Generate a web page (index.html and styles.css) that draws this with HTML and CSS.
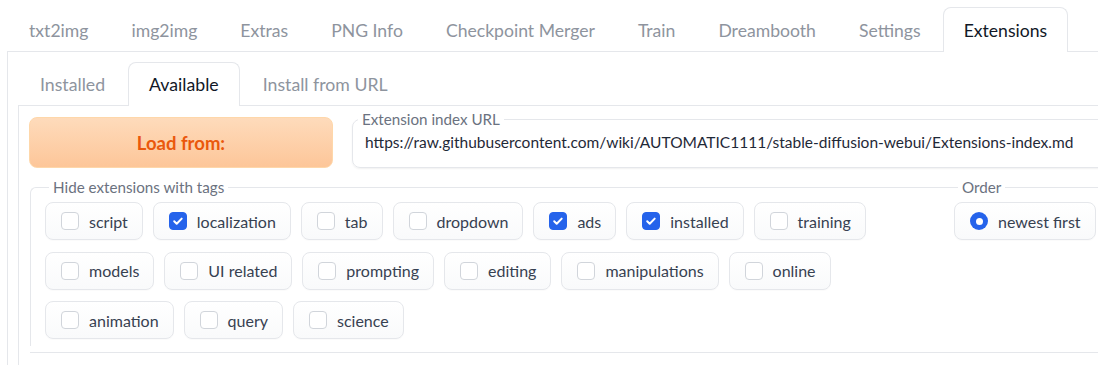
FILE: index.html
```html
<!DOCTYPE html>
<html lang="en">
<head>
    <meta charset="UTF-8">
    <title>Extensions</title>
    <link rel="stylesheet" href="styles.css">
</head>
<body>
    <div class="app">
        <!-- Main tabs -->
        <div class="tab-nav main">
            <button class="tab">txt2img</button>
            <button class="tab">img2img</button>
            <button class="tab">Extras</button>
            <button class="tab">PNG Info</button>
            <button class="tab">Checkpoint Merger</button>
            <button class="tab">Train</button>
            <button class="tab">Dreambooth</button>
            <button class="tab">Settings</button>
            <button class="tab selected">Extensions</button>
        </div>
        <div class="tab-panel">
            <!-- Extension sub tabs -->
            <div class="tab-nav sub">
                <button class="tab">Installed</button>
                <button class="tab selected">Available</button>
                <button class="tab">Install from URL</button>
            </div>
            <div class="tab-panel sub">
                <div class="load-row">
                    <button class="load-button">Load from:</button>
                    <fieldset class="url-box">
                        <legend>Extension index URL</legend>
                        <input class="url-input" type="text" value="https://raw.githubusercontent.com/wiki/AUTOMATIC1111/stable-diffusion-webui/Extensions-index.md">
                    </fieldset>
                </div>

                <div class="filter-row">
                    <fieldset class="group tags">
                        <legend>Hide extensions with tags</legend>
                        <div class="options">
                            <label class="option"><span class="box"></span>script</label>
                            <label class="option"><span class="box checked"></span>localization</label>
                            <label class="option"><span class="box"></span>tab</label>
                            <label class="option"><span class="box"></span>dropdown</label>
                            <label class="option"><span class="box checked"></span>ads</label>
                            <label class="option"><span class="box checked"></span>installed</label>
                            <label class="option"><span class="box"></span>training</label>
                            <label class="option"><span class="box"></span>models</label>
                            <label class="option"><span class="box"></span>UI related</label>
                            <label class="option"><span class="box"></span>prompting</label>
                            <label class="option"><span class="box"></span>editing</label>
                            <label class="option"><span class="box"></span>manipulations</label>
                            <label class="option"><span class="box"></span>online</label>
                            <label class="option"><span class="box"></span>animation</label>
                            <label class="option"><span class="box"></span>query</label>
                            <label class="option"><span class="box"></span>science</label>
                        </div>
                    </fieldset>
                    <fieldset class="group order">
                        <legend>Order</legend>
                        <div class="options">
                            <label class="option"><span class="radio"></span>newest first</label>
                        </div>
                    </fieldset>
                </div>
            </div>
        </div>
    </div>
</body>
</html>
```

FILE: styles.css
```css
* {
    margin: 0;
    padding: 0;
    box-sizing: border-box;
}

body {
    font-family: 'Lato', 'Noto Sans', sans-serif;
    background: white;
    overflow: hidden;
    color: #374151;
}

.app {
    width: 1130px;
    height: 365px;
    padding: 7px 0 0 7px;
    display: flex;
    flex-direction: column;
}

/* Tabs */
.tab-nav {
    display: flex;
    gap: 2px;
    padding-left: 1px;
    margin-bottom: -1px;
}

.tab {
    font-family: inherit;
    font-size: 17.7px;
    color: #8e949e;
    background: none;
    border: 1px solid transparent;
    border-bottom: none;
    border-radius: 8px 8px 0 0;
    height: 45px;
    padding: 0 20px;
    cursor: pointer;
}

.tab-nav.main {
    gap: 1px;
}

.tab-nav.main .tab {
    font-size: 17.6px;
}

.tab.selected {
    color: #111827;
    background: white;
    border-color: #e5e7eb;
    position: relative;
    z-index: 1;
}

.tab-panel {
    flex: 1;
    display: flex;
    flex-direction: column;
    border: 1px solid #e5e7eb;
    border-right: none;
    border-bottom: none;
    padding: 10px 0 0 10px;
}

.tab-nav.sub .tab {
    height: 44px;
}

.tab-panel.sub {
    padding: 11px 0 0 10px;
}

/* Load row */
.load-row {
    display: flex;
    gap: 19px;
    align-items: flex-start;
}

.load-button {
    flex: none;
    width: 304px;
    height: 51px;
    font-family: inherit;
    font-size: 18.5px;
    font-weight: bold;
    color: #ea580c;
    background: linear-gradient(to bottom, #fedbbb, #fdc699);
    border: 1px solid #fed7aa;
    border-radius: 8px;
    cursor: pointer;
}

.url-box {
    flex: 1;
    border: 1px solid #e5e7eb;
    border-radius: 8px;
    margin-top: -7px;
    padding: 0 12px 11px;
    box-shadow: 0 1px 2px rgba(0, 0, 0, 0.06);
}

.url-box legend,
.group legend {
    font-size: 15.2px;
    color: #6b7280;
    padding: 0 4px;
    margin-left: 4px;
}

.url-box legend {
    margin-left: -7px;
}

.url-input {
    width: 100%;
    border: none;
    outline: none;
    font-family: inherit;
    font-size: 15.5px;
    color: #1f2937;
    height: 28px;
}

/* Filters */
.filter-row {
    display: flex;
    margin-top: 10px;
    border-bottom: 1px solid #e5e7eb;
    margin-left: 1px;
}

.group {
    border: none;
    border-top: 1px solid #e5e7eb;
}

.group.tags {
    width: 912px;
    border-left: 1px solid #e5e7eb;
    border-radius: 6px 0 0 0;
    padding: 6px 14px 7px;
    margin-bottom: 6px;
}

.group.order {
    flex: 1;
    padding: 6px 0 0 12px;
}

.options {
    display: flex;
    flex-wrap: wrap;
    gap: 11.5px 10px;
}

.option {
    display: flex;
    align-items: center;
    gap: 10px;
    height: 38px;
    padding: 0 14px 0 15px;
    font-size: 16px;
    color: #374151;
    background: linear-gradient(to bottom, #ffffff, #f9fafb);
    border: 1px solid #e5e7eb;
    border-radius: 8px;
    box-shadow: 0 1px 1px rgba(0, 0, 0, 0.02);
}

.box {
    width: 18px;
    height: 18px;
    border: 1px solid #d1d5db;
    border-radius: 4px;
    background: white;
}

.box.checked {
    border-color: #2563eb;
    background: #2563eb url("data:image/svg+xml,%3Csvg xmlns='http://www.w3.org/2000/svg' viewBox='0 0 16 16'%3E%3Cpath d='M4.2 8.3l2.5 2.5 5-5.2' fill='none' stroke='white' stroke-width='2' stroke-linecap='round' stroke-linejoin='round'/%3E%3C/svg%3E") center / 100% no-repeat;
}

.radio {
    width: 18px;
    height: 18px;
    border-radius: 50%;
    background: #2563eb;
    display: flex;
    align-items: center;
    justify-content: center;
}

.radio::after {
    content: "";
    width: 7px;
    height: 7px;
    border-radius: 50%;
    background: white;
}
```
